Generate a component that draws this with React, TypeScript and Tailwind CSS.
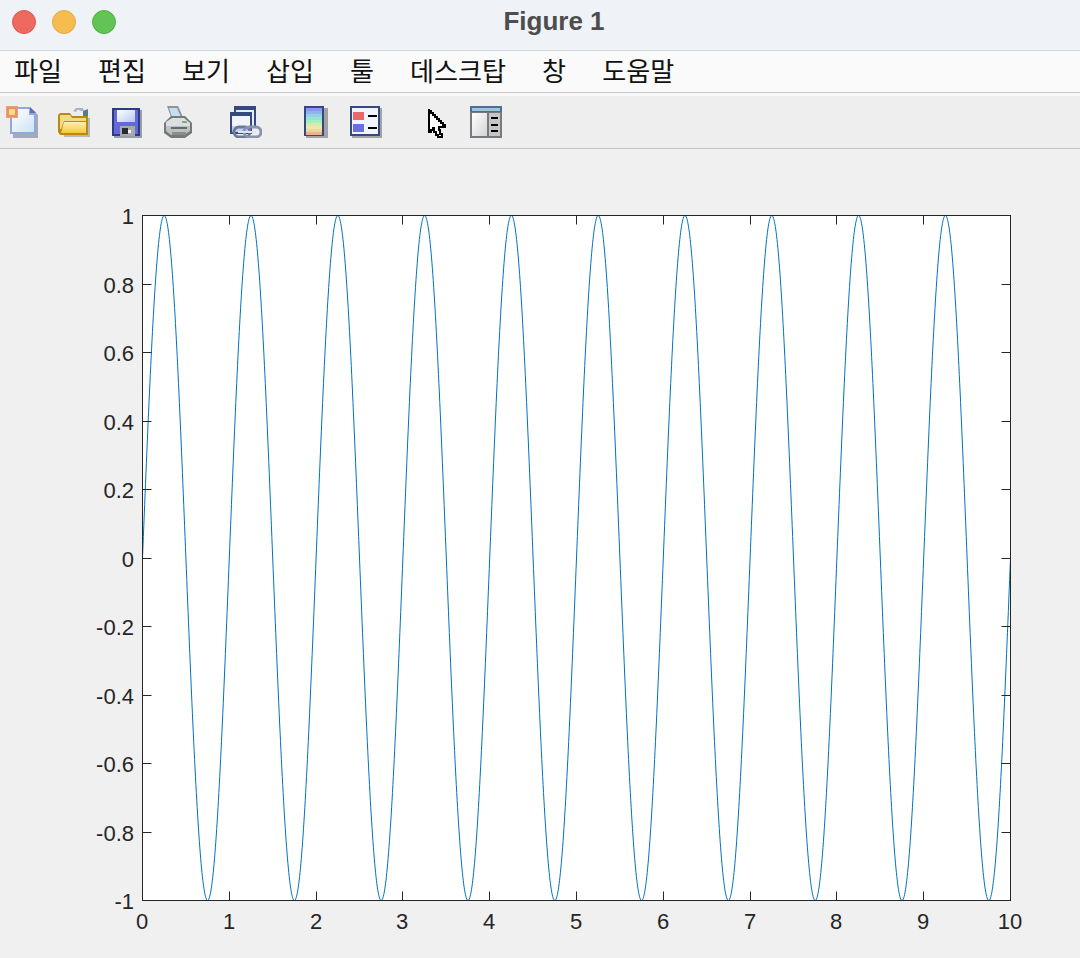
import React from 'react';

const menus = ['파일', '편집', '보기', '삽입', '툴', '데스크탑', '창', '도움말'];

const xTicks = [0, 1, 2, 3, 4, 5, 6, 7, 8, 9, 10];
const yTicks = ['1', '0.8', '0.6', '0.4', '0.2', '0', '-0.2', '-0.4', '-0.6', '-0.8', '-1'];

const left = 142.5;
const right = 1010.5;
const top = 215.5;
const bottom = 900.5;

// y = sin(2*pi*x), x from 0 to 10
function wavePath() {
  const pts: string[] = [];
  for (let i = 0; i <= 2000; i++) {
    const x = i / 200;
    const px = left + (x / 10) * (right - left);
    const py = (top + bottom) / 2 - (Math.sin(2 * Math.PI * x) * (bottom - top)) / 2;
    pts.push(`${px.toFixed(2)},${py.toFixed(2)}`);
  }
  return 'M' + pts.join('L');
}

function NewIcon() {
  return (
    <svg width="32" height="32" viewBox="0 0 32 32" className="block">
      <defs>
        <linearGradient id="docFill" x1="0" y1="0" x2="1" y2="1">
          <stop offset="0" stopColor="#ffffff" />
          <stop offset="1" stopColor="#cfe2f5" />
        </linearGradient>
      </defs>
      <path d="M7 4H27L32 9V32H7Z" fill="#a5a9ba" />
      <path d="M4 1H24L30 7V28H4Z" fill="#8ea9dc" />
      <path d="M6 3H23V9H28V26H6Z" fill="url(#docFill)" />
      <path d="M24 1L30 7H24Z" fill="#5f75a8" />
      <rect x="0" y="0" width="12" height="12" fill="#e9a17c" />
      <rect x="1" y="1" width="10" height="10" fill="#ec8f63" />
      <rect x="3" y="3" width="6" height="6" fill="#f4dc8a" />
    </svg>
  );
}

function FolderIcon() {
  return (
    <svg width="32" height="32" viewBox="0 0 32 32" className="block">
      <defs>
        <linearGradient id="folderFill" x1="0" y1="0" x2="0" y2="1">
          <stop offset="0" stopColor="#fff2b0" />
          <stop offset="1" stopColor="#f6c63c" />
        </linearGradient>
      </defs>
      <path d="M15 5L18 2H25L26 5H23L21 4H19L18 6Z" fill="#a9b3c6" />
      <path d="M25 5L30 3V10H25Z" fill="#5d7699" />
      <path d="M6 31H32V12H28V28H6Z" fill="#b4b8c0" />
      <path d="M0 9L2 7H12L14 10H30V29H2L0 26Z" fill="#b98a12" />
      <path d="M2 9H12L14 12H28V15H6L3 23H2Z" fill="#f3d98a" />
      <path d="M6 16H28V27H3Z" fill="url(#folderFill)" />
    </svg>
  );
}

function SaveIcon() {
  return (
    <svg width="32" height="32" viewBox="0 0 32 32" className="block">
      <defs>
        <linearGradient id="labelFill" x1="0" y1="0" x2="1" y2="1">
          <stop offset="0" stopColor="#ffffff" />
          <stop offset="1" stopColor="#b9c8ee" />
        </linearGradient>
      </defs>
      <rect x="4" y="4" width="28" height="29" fill="#9a9ca8" />
      <rect x="2" y="2" width="28" height="28" fill="#2c3b86" />
      <rect x="4" y="4" width="24" height="24" fill="#6468dc" />
      <rect x="7" y="4" width="18" height="12" fill="url(#labelFill)" />
      <rect x="10" y="20" width="15" height="10" fill="#a7aaa8" />
      <rect x="12" y="22" width="6" height="6" fill="#2a2a34" />
      <rect x="18" y="24" width="3" height="3" fill="#f4f4f4" />
    </svg>
  );
}

function PrintIcon() {
  return (
    <svg width="32" height="32" viewBox="0 0 32 32" className="block">
      <path d="M5 0H16L21 11H9Z" fill="#8d939b" />
      <path d="M7 2H15L19 11H10Z" fill="#c4def2" />
      <path d="M2 17L9 10H23L30 17V27L23 32H9L2 27Z" fill="#76797b" />
      <path d="M4 16L10 12H22L28 17V20H4Z" fill="#dcdfdf" />
      <path d="M4 20H28V25L22 29H9L4 25Z" fill="#bdc1c1" />
      <rect x="9" y="21" width="16" height="2" fill="#666a69" />
      <rect x="20" y="15" width="5" height="2" fill="#7fae7f" />
      <rect x="10" y="26" width="14" height="3" fill="#8a8e8d" />
    </svg>
  );
}

function LinkIcon() {
  return (
    <svg width="32" height="32" viewBox="0 0 32 32" className="block">
      <rect x="4" y="0" width="22" height="22" fill="#34497f" />
      <rect x="6" y="4" width="18" height="16" fill="#e8edf6" />
      <rect x="0" y="6" width="22" height="22" fill="#34497f" />
      <rect x="2" y="10" width="18" height="16" fill="#f1f4fa" />
      <rect x="2" y="20" width="18" height="6" fill="#c4d0e4" />
      <rect x="4" y="21" width="16" height="10" rx="5" fill="none" stroke="#6b7a96" strokeWidth="3" />
      <rect x="14" y="21" width="17" height="10" rx="5" fill="none" stroke="#8796b0" strokeWidth="3" />
      <rect x="8" y="25" width="18" height="2" fill="#dfe5ee" />
    </svg>
  );
}

function ColorbarIcon() {
  const bands = ['#8f97e8', '#90b4ea', '#8fd2e6', '#97e4d4', '#acebbc', '#cdeeb0', '#ece8a6', '#f3d39a', '#eeb08e'];
  return (
    <svg width="32" height="32" viewBox="0 0 32 32" className="block">
      <rect x="8" y="2" width="22" height="30" fill="#a3a3a6" />
      <rect x="6" y="0" width="20" height="30" fill="#34497f" />
      {bands.map((c, i) => (
        <rect key={c} x="8" y={2 + i * 3} width="16" height="3" fill={c} />
      ))}
    </svg>
  );
}

function LegendIcon() {
  return (
    <svg width="32" height="32" viewBox="0 0 32 32" className="block">
      <rect x="2" y="2" width="30" height="30" fill="#a3a3a6" />
      <rect x="0" y="0" width="30" height="30" fill="#34497f" />
      <rect x="2" y="2" width="26" height="26" fill="#f0f4fb" />
      <rect x="3" y="6" width="11" height="8" fill="#e66a6a" />
      <rect x="3" y="18" width="11" height="8" fill="#6c6ce4" />
      <rect x="18" y="9" width="9" height="2" fill="#000000" />
      <rect x="18" y="21" width="9" height="2" fill="#000000" />
    </svg>
  );
}

function CursorIcon() {
  return (
    <svg width="32" height="32" viewBox="0 0 32 32" className="block" shapeRendering="crispEdges">
      <path
        d="M5 3V26H7V24H9V22H10V26H12V29H14V31H18V28H16V24H15V21H21V19H19V17H17V15H15V13H13V11H11V9H9V7H7V5H5Z"
        fill="#ffffff"
        stroke="#000000"
        strokeWidth="2"
      />
    </svg>
  );
}

function PanelIcon() {
  return (
    <svg width="32" height="32" viewBox="0 0 32 32" className="block">
      <defs>
        <linearGradient id="panelFill" x1="0" y1="0" x2="1" y2="1">
          <stop offset="0" stopColor="#ffffff" />
          <stop offset="1" stopColor="#d4d4d4" />
        </linearGradient>
      </defs>
      <rect x="0" y="0" width="32" height="32" fill="#76797e" />
      <rect x="0" y="0" width="32" height="6" fill="#4d6f94" />
      <rect x="2" y="2" width="28" height="3" fill="#9cc6df" />
      <rect x="2" y="7" width="15" height="23" fill="url(#panelFill)" />
      <rect x="19" y="7" width="11" height="23" fill="#c6c6c6" />
      <rect x="21" y="11" width="7" height="2" fill="#000000" />
      <rect x="21" y="18" width="7" height="2" fill="#000000" />
      <rect x="21" y="24" width="7" height="2" fill="#000000" />
    </svg>
  );
}

export default function App() {
  return (
    <div className="flex h-[958px] w-[1080px] flex-col overflow-hidden bg-[#f0f0f0]">
      {/* title bar */}
      <div className="relative flex h-[51px] shrink-0 items-center justify-center border-b border-[#d6d6d6] bg-[#eff3f7] pl-7">
        <div className="absolute left-3 top-[10px] flex gap-4">
          <span className="h-6 w-6 rounded-full border border-[#e0574c] bg-[#ee6a5f]" />
          <span className="h-6 w-6 rounded-full border border-[#e0a93f] bg-[#f5bd4f]" />
          <span className="h-6 w-6 rounded-full border border-[#52b046] bg-[#61c454]" />
        </div>
        <span className="pb-[9px] font-['Liberation_Sans',sans-serif] text-[26px] font-bold leading-none text-[#4d4d4d]">
          Figure 1
        </span>
      </div>

      {/* menu */}
      <div className="flex h-[42px] shrink-0 items-center gap-9 border-b border-[#c8c8c8] bg-[#fafafa] pb-[3px] pl-[14px] font-['Noto_Sans_CJK_KR',sans-serif] text-[26.1px] leading-none text-[#111111]">
        {menus.map((m) => (
          <span key={m}>{m}</span>
        ))}
      </div>

      {/* toolbar */}
      <div className="h-[3px] shrink-0 bg-[#f8f8f8]" />
      <div className="flex h-[53px] shrink-0 border-b border-[#c4c4c4] bg-[#eeeeee] pl-[6px] pt-[10px]">
        <NewIcon />
        <div className="ml-5"><FolderIcon /></div>
        <div className="ml-5"><SaveIcon /></div>
        <div className="ml-5"><PrintIcon /></div>
        <div className="ml-9"><LinkIcon /></div>
        <div className="ml-9"><ColorbarIcon /></div>
        <div className="ml-5"><LegendIcon /></div>
        <div className="ml-[42px]"><CursorIcon /></div>
        <div className="ml-[14px]"><PanelIcon /></div>
      </div>

      {/* figure */}
      <svg width="1080" height="809" viewBox="0 149 1080 809" className="block shrink-0">
        <rect x={left} y={top} width={right - left} height={bottom - top} fill="#ffffff" />
        <path d={wavePath()} fill="none" stroke="#0072bd" strokeWidth="1" />
        <rect x={left} y={top} width={right - left} height={bottom - top} fill="none" stroke="#262626" strokeWidth="1" />
        {xTicks.map((t) => {
          const x = Math.floor(left + (t / 10) * (right - left)) + 0.5;
          return (
            <g key={t}>
              <line x1={x} x2={x} y1={bottom} y2={bottom - 9} stroke="#262626" />
              <line x1={x} x2={x} y1={top} y2={top + 9} stroke="#262626" />
              <text x={x - 0.5} y={929} textAnchor="middle" fontSize="22" fill="#262626" fontFamily="'Liberation Sans', sans-serif">
                {t}
              </text>
            </g>
          );
        })}
        {yTicks.map((t, i) => {
          const y = Math.floor(top + (i / 10) * (bottom - top)) + 0.5;
          return (
            <g key={t}>
              <line x1={left} x2={left + 9} y1={y} y2={y} stroke="#262626" />
              <line x1={right} x2={right - 9} y1={y} y2={y} stroke="#262626" />
              <text x={134} y={y + 8} textAnchor="end" fontSize="22" fill="#262626" fontFamily="'Liberation Sans', sans-serif">
                {t}
              </text>
            </g>
          );
        })}
      </svg>
    </div>
  );
}
